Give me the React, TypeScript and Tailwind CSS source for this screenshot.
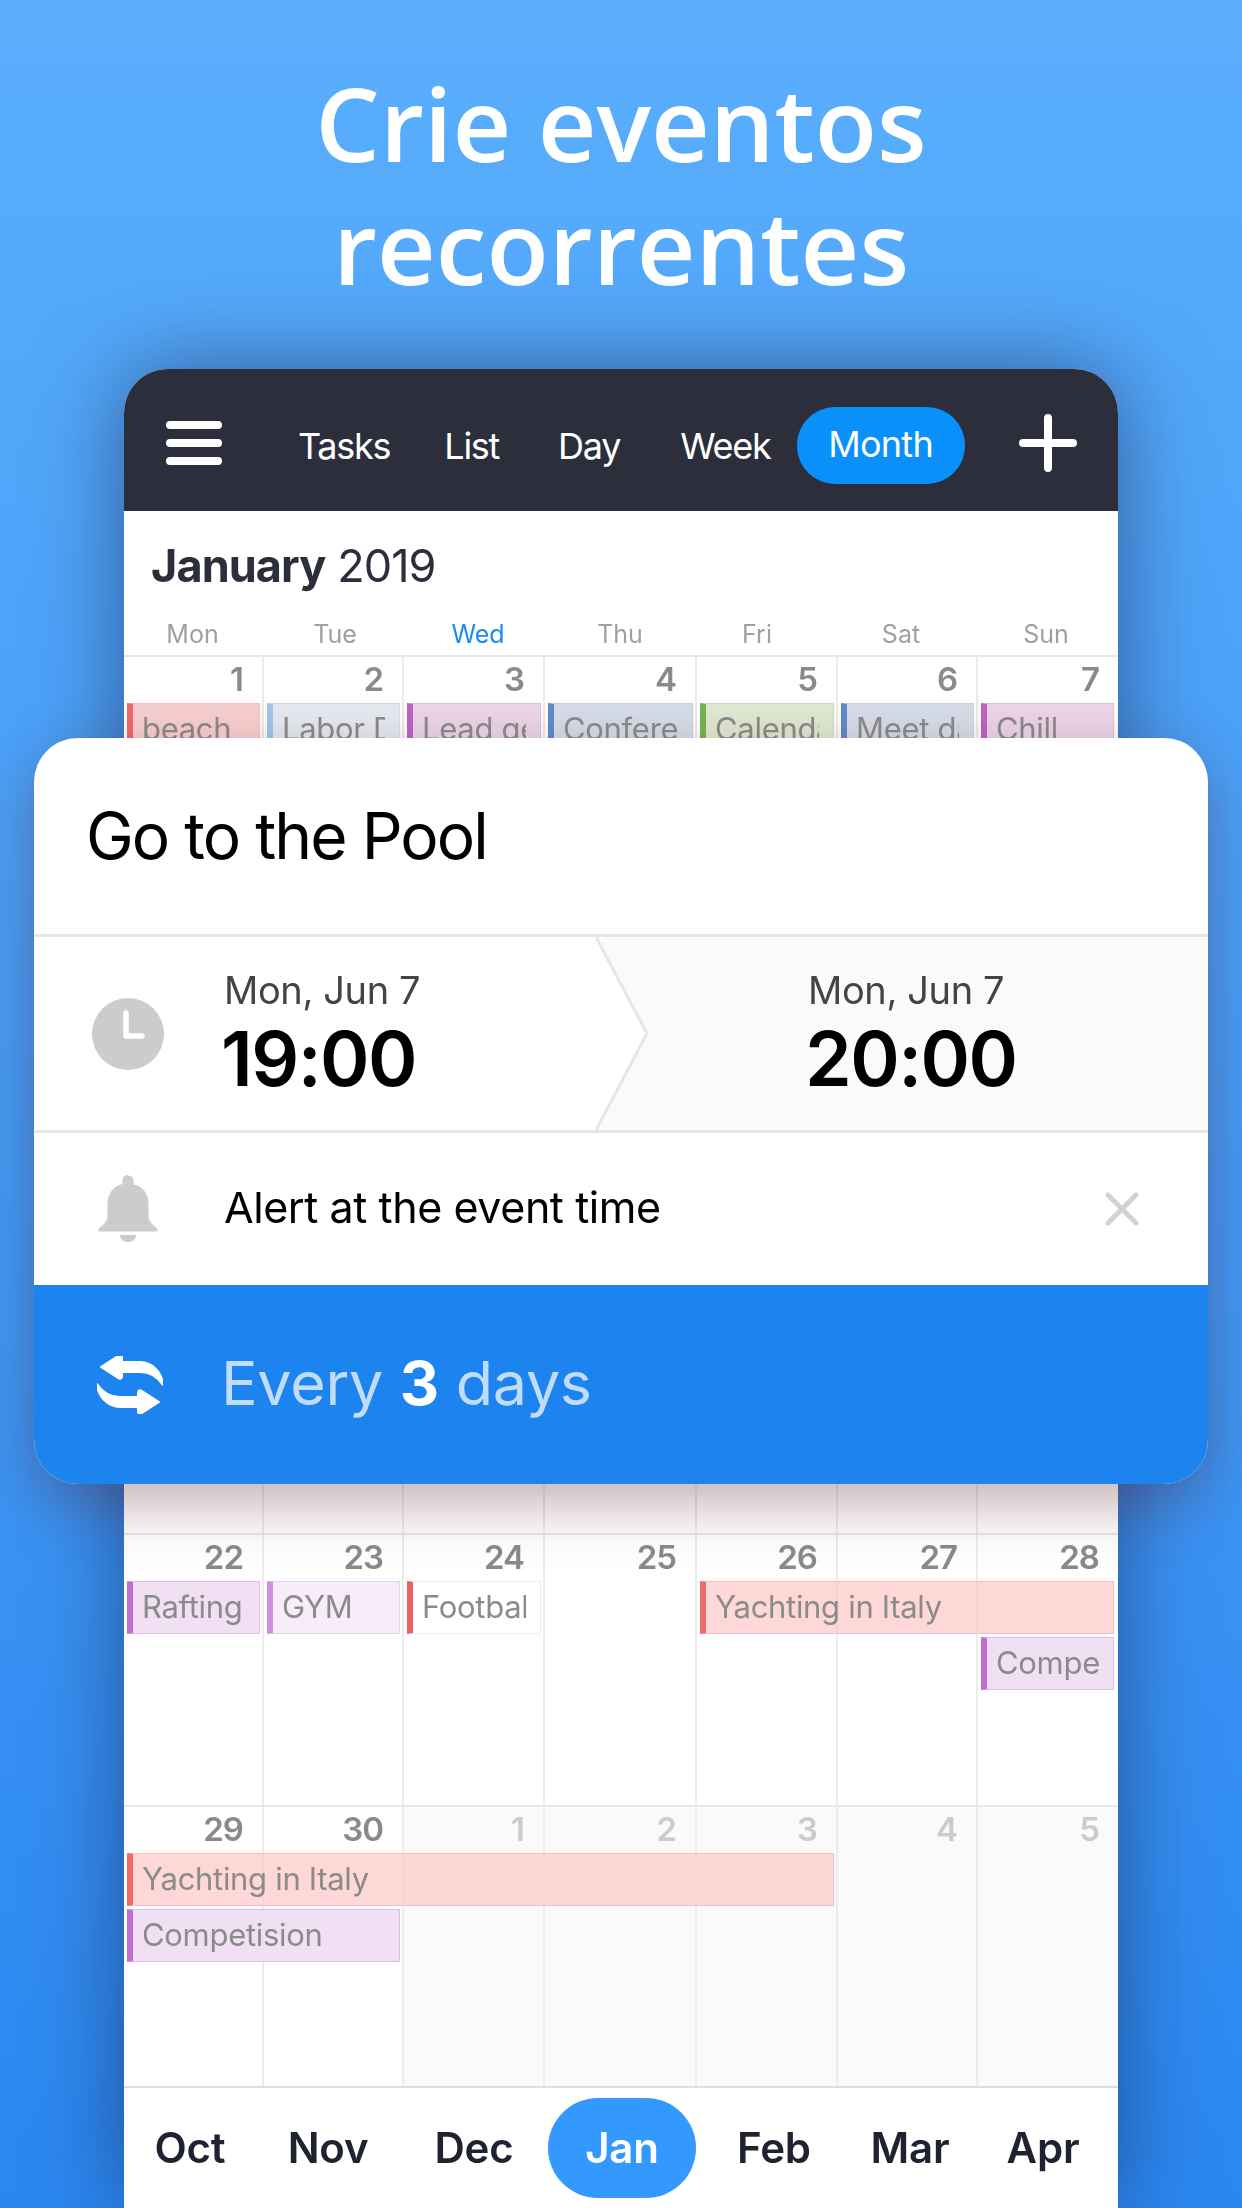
// Pantalla promocional: calendario de fondo y tarjeta de evento encima.
const COLS = 'grid grid-cols-[140px_140px_141px_152px_141px_140px_140px]'

type Color = 'red' | 'redSoft' | 'blue' | 'purple' | 'slate' | 'green' | 'lilac' | 'pink' | 'white'

const tonos: Record<Color, string> = {
  red: 'border-[#f2bebe] border-l-[#f06a6a] bg-[#fdc9c9]/75',
  redSoft: 'border-[#f0c4c4] border-l-[#ef6a6a] bg-[#f8d0d0]',
  blue: 'border-[#d3dde8] border-l-[#a3c6ea] bg-[#e5ebf2]',
  slate: 'border-[#c8d2e0] border-l-[#5f8ccb] bg-[#d6deea]',
  green: 'border-[#d0dcc0] border-l-[#74b552] bg-[#e0ead2]',
  purple: 'border-[#dcc0e2] border-l-[#c06fd0] bg-[#efdcf3]/90',
  pink: 'border-[#dcc0dc] border-l-[#c063c6] bg-[#ecd6ea]',
  lilac: 'border-[#e6d4ec] border-l-[#cf8fdc] bg-[#f8ecfb]',
  white: 'border-[#eeeeee] border-l-[#ee5f63] bg-white',
}

function Evento({ texto, color, className }: { texto: string; color: Color; className: string }) {
  return (
    <div className={`mb-[3px] ml-[3px] mr-[4px] flex h-[53px] min-w-0 items-center overflow-hidden border border-l-[6px] pl-[9px] pr-[14px] text-[31px] tracking-[-0.01em] text-[#8b8b8b] ${tonos[color]} ${className}`}>
      <span className="overflow-hidden whitespace-nowrap">{texto}</span>
    </div>
  )
}

function Celda({ n, col, fuera, ultima }: { n: number; col: string; fuera?: boolean; ultima?: boolean }) {
  return (
    <div className={`row-span-full row-start-1 pr-[19px] pt-[2px] text-right text-[33px] font-semibold leading-[40px] tracking-[-0.03em] ${col} ${ultima ? '' : 'border-r-2 border-[#ececec]'} ${fuera ? 'bg-[#fafafa] text-[#cbcbcb]' : 'text-[#8a8a8a]'}`}>
      {n}
    </div>
  )
}

function Semana({ dias, fueraDesde, alto, children }: { dias: number[]; fueraDesde?: number; alto: string; children?: React.ReactNode }) {
  const cols = ['col-start-1', 'col-start-2', 'col-start-3', 'col-start-4', 'col-start-5', 'col-start-6', 'col-start-7']
  return (
    <div className={`${COLS} grid-rows-[46px_56px_56px_1fr] border-t-2 border-[#e8e8e8] ${alto}`}>
      {dias.map((d, i) => (
        <Celda key={i} n={d} col={cols[i]} fuera={fueraDesde !== undefined && i >= fueraDesde} ultima={i === 6} />
      ))}
      {children}
    </div>
  )
}

function IconoMenu() {
  return (
    <div className="flex w-[56px] flex-col gap-[10px]">
      <span className="h-[8px] rounded-full bg-white" />
      <span className="h-[8px] rounded-full bg-white" />
      <span className="h-[8px] rounded-full bg-white" />
    </div>
  )
}

function Cabecera() {
  return (
    <div className="flex h-[142px] items-center bg-[#2c2f3b] pl-[42px] pt-[6px] text-[36px] tracking-[-0.035em] text-white">
      <IconoMenu />
      <span className="ml-[76px] mt-[6px]">Tasks</span>
      <span className="ml-[54px] mt-[6px]">List</span>
      <span className="ml-[59px] mt-[6px]">Day</span>
      <span className="ml-[60px] mt-[6px]">Week</span>
      <span className="ml-[26px] mt-[5px] flex h-[77px] w-[168px] items-center justify-center rounded-[38px] bg-[#0a90fb] pb-[3px] tracking-[-0.02em]">Month</span>
      <svg className="ml-[54px]" width="58" height="58" viewBox="0 0 58 58" fill="none" stroke="#fff" strokeWidth="8" strokeLinecap="round" aria-hidden="true">
        <path d="M29 4v50M4 29h50" />
      </svg>
    </div>
  )
}

function Calendario() {
  return (
    <div className="mx-[124px] overflow-hidden rounded-t-[44px] bg-white">
      <Cabecera />
      <div className="pl-[27px] pt-[25px] text-[45px] leading-[60px] tracking-[-0.02em] text-[#2c2f3b]">
        <span className="font-bold">January</span> 2019
      </div>
      <div className="mt-[22px] grid grid-cols-[137px_148px_138px_146px_128px_160px_130px] pb-[5px] text-center text-[25px] leading-[32px] text-[#a0a0a0]">
        <span>Mon</span>
        <span>Tue</span>
        <span className="text-[#1a8cf0]">Wed</span>
        <span>Thu</span>
        <span>Fri</span>
        <span>Sat</span>
        <span>Sun</span>
      </div>
      <Semana dias={[1, 2, 3, 4, 5, 6, 7]} alto="h-[878px]">
        <Evento texto="beach" color="redSoft" className="col-start-1 row-start-2" />
        <Evento texto="Labor Day" color="blue" className="col-start-2 row-start-2" />
        <Evento texto="Lead generation" color="pink" className="col-start-3 row-start-2" />
        <Evento texto="Conference" color="slate" className="col-start-4 row-start-2" />
        <Evento texto="Calendar" color="green" className="col-start-5 row-start-2" />
        <Evento texto="Meet day" color="slate" className="col-start-6 row-start-2" />
        <Evento texto="Chill" color="pink" className="col-start-7 row-start-2" />
      </Semana>
      <Semana dias={[22, 23, 24, 25, 26, 27, 28]} alto="h-[272px]">
        <Evento texto="Rafting" color="purple" className="col-start-1 row-start-2" />
        <Evento texto="GYM" color="lilac" className="col-start-2 row-start-2" />
        <Evento texto="Football" color="white" className="col-start-3 row-start-2" />
        <Evento texto="Yachting in Italy" color="red" className="col-span-3 col-start-5 row-start-2" />
        <Evento texto="Competision" color="purple" className="col-start-7 row-start-3" />
      </Semana>
      <Semana dias={[29, 30, 1, 2, 3, 4, 5]} fueraDesde={2} alto="h-[281px]">
        <Evento texto="Yachting in Italy" color="red" className="col-span-5 col-start-1 row-start-2" />
        <Evento texto="Competision" color="purple" className="col-span-2 col-start-1 row-start-3" />
      </Semana>
      <div className="grid h-[122px] grid-cols-[132px_144px_148px_148px_156px_116px_150px] items-center border-t-2 border-[#dedede] pb-[1px] text-center text-[42px] font-semibold tracking-[-0.005em] text-[#1f2230]">
        <span>Oct</span>
        <span>Nov</span>
        <span>Dec</span>
        <span className="flex h-[100px] items-center justify-center rounded-[50px] bg-[#3399ff] text-white">Jan</span>
        <span>Feb</span>
        <span>Mar</span>
        <span>Apr</span>
      </div>
    </div>
  )
}

function Horario({ hora }: { hora: string }) {
  return (
    <div className="flex flex-col">
      <span className="text-[38px] leading-[46px] tracking-[-0.01em] text-[#444444]">Mon, Jun 7</span>
      <span className="mt-[4px] -ml-[3px] text-[75px] font-semibold leading-[84px] tracking-[-0.02em] text-black">{hora}</span>
    </div>
  )
}

function TarjetaEvento() {
  return (
    <div className="absolute left-[34px] top-[738px] h-[746px] w-[1174px] overflow-hidden rounded-[44px] bg-white shadow-[0_20px_60px_rgba(90,30,40,0.36)]">
      <div className="flex h-[199px] items-center border-b-[3px] border-[#e6e6e6] pl-[52px] text-[64px] tracking-[-0.03em] text-black">
        Go to the Pool
      </div>
      <div className="flex h-[196px] border-b-[3px] border-[#e6e6e6]">
        <div className="relative z-10 flex w-[562px] items-center pl-[58px]">
          <svg width="72" height="72" viewBox="0 0 72 72" aria-hidden="true">
            <circle cx="36" cy="36" r="36" fill="#cccccc" />
            <path d="M34 15v23h16" fill="none" stroke="#fff" strokeWidth="5.5" strokeLinecap="round" strokeLinejoin="round" />
          </svg>
          <div className="ml-[60px]">
            <Horario hora="19:00" />
          </div>
          <svg className="absolute left-full top-0" width="52" height="193" viewBox="0 0 52 193" aria-hidden="true">
            <path d="M0 0L51 96.5L0 193Z" fill="#fff" />
            <path d="M0 0L51 96.5L0 193" fill="none" stroke="#e6e6e6" strokeWidth="3" />
          </svg>
        </div>
        <div className="flex flex-1 items-center bg-[#fafafa] pl-[212px]">
          <Horario hora="20:00" />
        </div>
      </div>
      <div className="flex h-[152px] items-center pl-[64px]">
        <svg width="60" height="70" viewBox="18 22 60 70" fill="#cccccc" aria-hidden="true">
          <path d="M48 23c-3.5 0-5.5 2.5-5.5 5v4C33 34 27.5 42 27.500 52v13c0 3-2 5-4 7.500l-4.500 4c-1.500 1.500-.5 3 1.500 3h55c2 0 3-1.500 1.500-3l-4.500-4c-2-2.500-4-4.500-4-7.500V52c0-10-5.500-18-15-19.500v-4c0-2.500-2-5-5.500-5z" />
          <path d="M39.500 83h17c-1 4.500-4 7-8.500 7s-7.500-2.500-8.500-7z" />
        </svg>
        <span className="mb-[3px] ml-[66px] text-[43px] tracking-[-0.01em] text-black">Alert at the event time</span>
        <svg className="ml-auto mr-[69px]" width="34" height="34" viewBox="0 0 34 34" fill="none" stroke="#d2d2d2" strokeWidth="5" strokeLinecap="round" aria-hidden="true">
          <path d="M3 3l28 28M31 3L3 31" />
        </svg>
      </div>
      <div className="flex h-[199px] items-center bg-[#1d83ee] pl-[63px] text-[61px] tracking-[-0.005em] text-[#c0dcfb]">
        <svg width="66" height="58" viewBox="17 17 66 58" fill="#fff" stroke="#fff" strokeWidth="2" strokeLinejoin="round" aria-hidden="true">
          <path d="M21 28L38 17q4-2 4 2v4h18c12 0 22 10 23 23c-6-9-13-13-23-13H42v4q0 4-4 2Z" />
          <path d="M21 28L38 17q4-2 4 2v4h18c12 0 22 10 23 23c-6-9-13-13-23-13H42v4q0 4-4 2Z" transform="rotate(180 50 45.500)" />
        </svg>
        <span className="mb-[2px] ml-[58px]">
          Every <span className="font-bold text-white">3</span> days
        </span>
      </div>
    </div>
  )
}

export default function App() {
  return (
    <div className="relative h-[2208px] w-[1242px] overflow-hidden bg-linear-to-b from-[#5aaefc] to-[#2a87f0] font-['Inter',sans-serif]">
      <h1 className="pt-[61px] text-center font-['Open_Sans',sans-serif] text-[102px] font-semibold leading-[123px] text-white">
        Crie eventos
        <br />
        recorrentes
      </h1>
      <div className="mt-[62px] drop-shadow-[0_0_45px_rgba(25,30,70,0.55)]">
        <Calendario />
      </div>
      <TarjetaEvento />
    </div>
  )
}
